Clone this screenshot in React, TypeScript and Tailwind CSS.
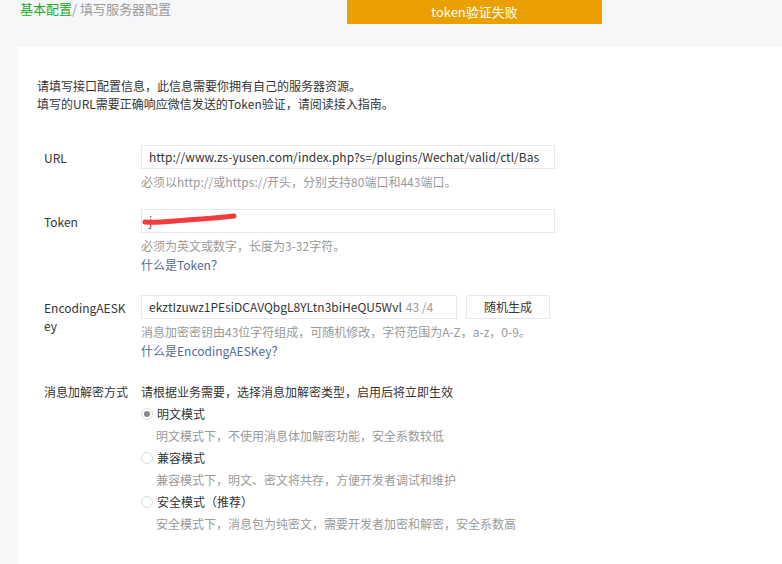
import React from "react";

const Radio = ({ checked }: { checked?: boolean }) => (
  <span className="w-[12px] h-[12px] rounded-full border border-[#d9dadc] bg-white flex items-center justify-center shrink-0">
    {checked && <span className="w-[6px] h-[6px] rounded-full bg-[#888]" />}
  </span>
);

const modes = [
  { name: "明文模式", desc: "明文模式下，不使用消息体加解密功能，安全系数较低", checked: true },
  { name: "兼容模式", desc: "兼容模式下，明文、密文将共存，方便开发者调试和维护" },
  { name: "安全模式（推荐）", desc: "安全模式下，消息包为纯密文，需要开发者加密和解密，安全系数高" },
];

export default function App() {
  return (
    <div
      className="w-[782px] h-[564px] overflow-hidden bg-[#f6f7f9] text-[12px] text-[#353535] relative"
      style={{ fontFamily: '"Microsoft YaHei", "Noto Sans CJK SC", sans-serif' }}
    >
      <div className="h-[47px] pl-[20px] pt-[1px] flex items-start">
        <div className="text-[13px] leading-[16px] text-[#9a9a9a]">
          <span className="text-[#1aad19]">基本配置</span>/ 填写服务器配置
        </div>
      </div>
      <div className="absolute left-[347px] top-0 w-[255px] h-[24px] bg-[#eaa000] text-white text-[13px] flex items-center justify-center">
        token验证失败
      </div>
      <div className="ml-[18px] bg-white h-[517px] pl-[19px] pt-[30px]">
        <div className="leading-[18px]">
          <div>请填写接口配置信息，此信息需要你拥有自己的服务器资源。</div>
          <div>填写的URL需要正确响应微信发送的Token验证，请阅读接入指南。</div>
        </div>

        <div className="mt-[32px] pl-[7px] flex flex-col">
          <div className="flex">
            <div className="w-[97px] pt-[4px]">URL</div>
            <div>
              <div className="w-[414px] h-[24px] border border-[#e4e8eb] px-[7px] flex items-center text-[12px] whitespace-nowrap overflow-hidden">
                http://www.zs-yusen.com/index.php?s=/plugins/Wechat/valid/ctl/Bas
              </div>
              <div className="text-[#9a9a9a] leading-[18px] mt-[4px]">必须以http://或https://开头，分别支持80端口和443端口。</div>
            </div>
          </div>

          <div className="flex mt-[18px]">
            <div className="w-[97px] pt-[4px]">Token</div>
            <div>
              <div className="w-[414px] h-[24px] border border-[#e4e8eb] px-[7px] flex items-center relative">
                <span className="text-[#555]">j</span>
                <svg className="absolute left-[0px] top-[2px]" width="96" height="14" viewBox="0 0 96 14">
                  <path d="M3 10 C15 11 30 9 45 8 C60 7 75 6 92 4" stroke="#f53b3b" strokeWidth="5" fill="none" strokeLinecap="round" />
                </svg>
              </div>
              <div className="text-[#9a9a9a] leading-[18px] mt-[4px]">必须为英文或数字，长度为3-32字符。</div>
              <div className="text-[#576b95] leading-[18px] mt-[1px]">什么是Token？</div>
            </div>
          </div>

          <div className="flex mt-[21px]">
            <div className="w-[97px] pt-[4px] leading-[18px]">EncodingAESK<br />ey</div>
            <div>
              <div className="flex gap-[9px]">
                <div className="w-[316px] h-[24px] border border-[#e4e8eb] pl-[7px] flex items-center whitespace-nowrap overflow-hidden text-[12px]">
                  ekztIzuwz1PEsiDCAVQbgL8YLtn3biHeQU5Wvl<span className="text-[#9a9a9a] ml-[4px]">43 /4</span>
                </div>
                <div className="w-[84px] h-[24px] border border-[#e4e8eb] rounded-[2px] flex items-center justify-center">随机生成</div>
              </div>
              <div className="text-[#9a9a9a] leading-[18px] mt-[4px]">消息加密密钥由43位字符组成，可随机修改，字符范围为A-Z，a-z，0-9。</div>
              <div className="text-[#576b95] leading-[18px] mt-[1px]">什么是EncodingAESKey？</div>
            </div>
          </div>

          <div className="flex mt-[23px]">
            <div className="w-[97px] leading-[18px]">消息加解密方式</div>
            <div className="leading-[18px]">
              <div>请根据业务需要，选择消息加解密类型，启用后将立即生效</div>
              {modes.map((m) => (
                <div key={m.name} className="mt-[4px]">
                  <div className="flex items-center gap-[4px]">
                    <Radio checked={m.checked} />
                    <span>{m.name}</span>
                  </div>
                  <div className="text-[#9a9a9a] pl-[15px] mt-[4px]">{m.desc}</div>
                </div>
              ))}
            </div>
          </div>
        </div>
        <div className="mt-[32px] ml-[7px] border-t border-[#e7e7eb]" />
      </div>
    </div>
  );
}
